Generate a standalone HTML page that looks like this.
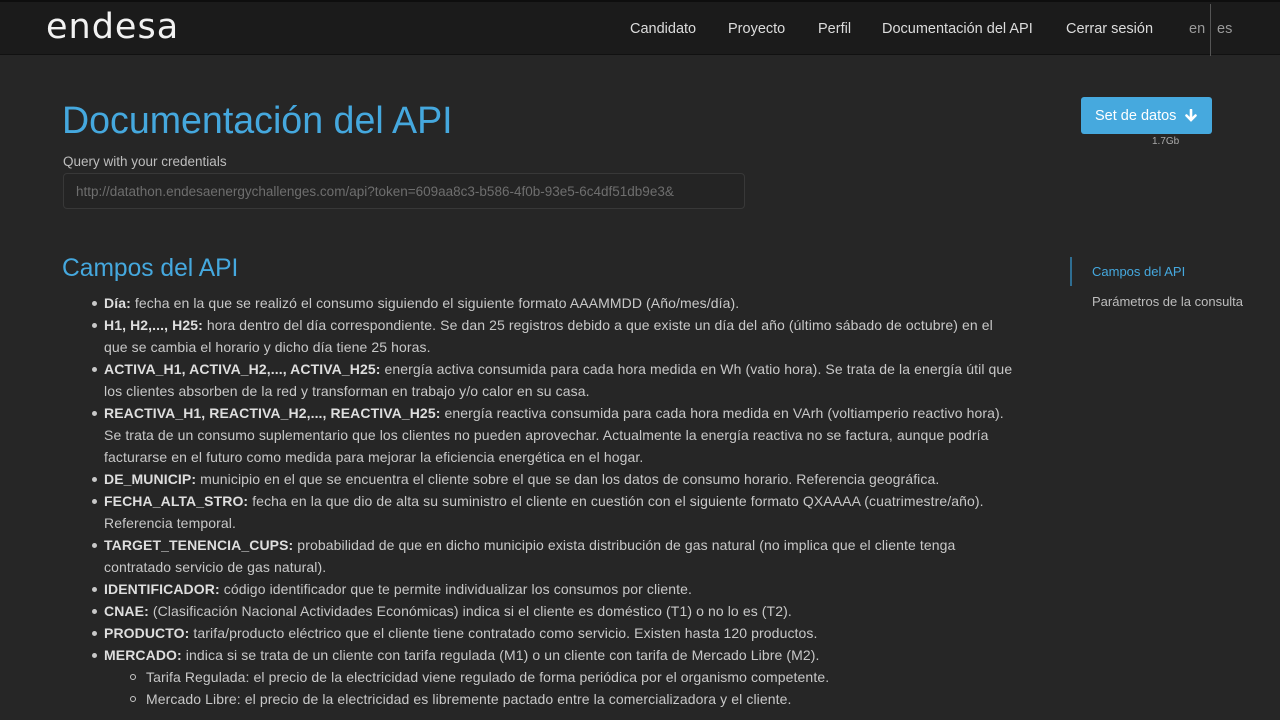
<!DOCTYPE html>
<html><head><meta charset="utf-8"><style>
*{margin:0;padding:0;box-sizing:border-box}
body{width:1280px;height:720px;overflow:hidden;background:#262626;font-family:"Liberation Sans",sans-serif;color:#c8c8c8;position:relative}
.nav{position:absolute;left:0;top:0;width:1280px;height:55px;background:#1b1b1b;border-bottom:1px solid #111;border-top:2px solid #0e0e0e}
.logo{position:absolute;left:46px;top:5px;font-size:35px;color:#f2f2f2;letter-spacing:1px;font-family:"DejaVu Sans","Liberation Sans",sans-serif;font-weight:normal}
.nav a{position:absolute;top:19px;font-size:14.5px;color:#dcdcdc;text-decoration:none;white-space:nowrap}
.lang{color:#9a9a9a!important}
.sep{position:absolute;left:1210px;top:2px;width:1px;height:52px;background:#555}
h1{position:absolute;left:62px;top:99px;font-size:37.6px;font-weight:normal;color:#45a8de;white-space:nowrap}
.q{position:absolute;left:63px;top:154px;font-size:13.5px;color:#bdbdbd}
.inp{position:absolute;left:63px;top:173px;width:682px;height:36px;border:1px solid #383838;border-radius:4px;background:#242424;color:#6e6e6e;font-size:13.5px;padding:10px 12px;white-space:nowrap;overflow:hidden}
.btn{position:absolute;left:1081px;top:97px;width:131px;height:37px;background:#46a9de;border-radius:3px;color:#fff;font-size:14.5px;padding:11px 0 0 14px}
.btn svg{position:absolute}
.gb{position:absolute;left:1152px;top:136px;font-size:10px;color:#aaa}
h2{position:absolute;left:62px;top:255px;font-size:24.6px;font-weight:normal;color:#45a8de}
.side{position:absolute;left:1070px;top:257px;width:2px;height:29px;background:#2f6e92}
.s1{position:absolute;left:1092px;top:264px;font-size:13px;color:#45a8de}
.s2{position:absolute;left:1092px;top:294px;font-size:13px;color:#bdbdbd}
ul{position:absolute;left:104px;top:292px;list-style:none;font-size:14px;line-height:22px;letter-spacing:0.1px;white-space:nowrap}
li{position:relative}
li.b:before{content:"";position:absolute;left:-12px;top:9px;width:5px;height:5px;border-radius:50%;background:#c8c8c8}
li.c{padding-left:42px}
li.c:before{content:"";position:absolute;left:26px;top:8px;width:4px;height:4px;border-radius:50%;border:1px solid #c8c8c8}
b{color:#dedede}
</style></head><body>
<div class="nav">
<div class="logo">endesa</div>
<a style="left:630px">Candidato</a>
<a style="left:728px">Proyecto</a>
<a style="left:818px">Perfil</a>
<a style="left:882px">Documentación del API</a>
<a style="left:1066px">Cerrar sesión</a>
<a class="lang" style="left:1189px">en</a>
<a class="lang" style="left:1217px">es</a>
<div class="sep"></div>
</div>
<h1>Documentación del API</h1>
<div class="q">Query with your credentials</div>
<div class="inp">http://datathon.endesaenergychallenges.com/api?token=609aa8c3-b586-4f0b-93e5-6c4df51db9e3&amp;</div>
<div class="btn">Set de datos<svg style="left:104px;top:12px" width="12" height="13" viewBox="0 0 12 13"><path d="M6 1v9M1.5 6.5L6 11l4.5-4.5" stroke="#fff" stroke-width="2.6" fill="none" stroke-linecap="round"/></svg></div>
<div class="gb">1.7Gb</div>
<h2>Campos del API</h2>
<div class="side"></div>
<div class="s1">Campos del API</div>
<div class="s2">Parámetros de la consulta</div>
<ul>
<li class="b"><b>Día:</b> fecha en la que se realizó el consumo siguiendo el siguiente formato AAAMMDD (Año/mes/día).</li>
<li class="b"><b>H1, H2,..., H25:</b> hora dentro del día correspondiente. Se dan 25 registros debido a que existe un día del año (último sábado de octubre) en el<br>que se cambia el horario y dicho día tiene 25 horas.</li>
<li class="b"><b>ACTIVA_H1, ACTIVA_H2,..., ACTIVA_H25:</b> energía activa consumida para cada hora medida en Wh (vatio hora). Se trata de la energía útil que<br>los clientes absorben de la red y transforman en trabajo y/o calor en su casa.</li>
<li class="b"><b>REACTIVA_H1, REACTIVA_H2,..., REACTIVA_H25:</b> energía reactiva consumida para cada hora medida en VArh (voltiamperio reactivo hora).<br>Se trata de un consumo suplementario que los clientes no pueden aprovechar. Actualmente la energía reactiva no se factura, aunque podría<br>facturarse en el futuro como medida para mejorar la eficiencia energética en el hogar.</li>
<li class="b"><b>DE_MUNICIP:</b> municipio en el que se encuentra el cliente sobre el que se dan los datos de consumo horario. Referencia geográfica.</li>
<li class="b"><b>FECHA_ALTA_STRO:</b> fecha en la que dio de alta su suministro el cliente en cuestión con el siguiente formato QXAAAA (cuatrimestre/año).<br>Referencia temporal.</li>
<li class="b"><b>TARGET_TENENCIA_CUPS:</b> probabilidad de que en dicho municipio exista distribución de gas natural (no implica que el cliente tenga<br>contratado servicio de gas natural).</li>
<li class="b"><b>IDENTIFICADOR:</b> código identificador que te permite individualizar los consumos por cliente.</li>
<li class="b"><b>CNAE:</b> (Clasificación Nacional Actividades Económicas) indica si el cliente es doméstico (T1) o no lo es (T2).</li>
<li class="b"><b>PRODUCTO:</b> tarifa/producto eléctrico que el cliente tiene contratado como servicio. Existen hasta 120 productos.</li>
<li class="b"><b>MERCADO:</b> indica si se trata de un cliente con tarifa regulada (M1) o un cliente con tarifa de Mercado Libre (M2).</li>
<li class="c">Tarifa Regulada: el precio de la electricidad viene regulado de forma periódica por el organismo competente.</li>
<li class="c">Mercado Libre: el precio de la electricidad es libremente pactado entre la comercializadora y el cliente.</li>
</ul>
</body></html>
